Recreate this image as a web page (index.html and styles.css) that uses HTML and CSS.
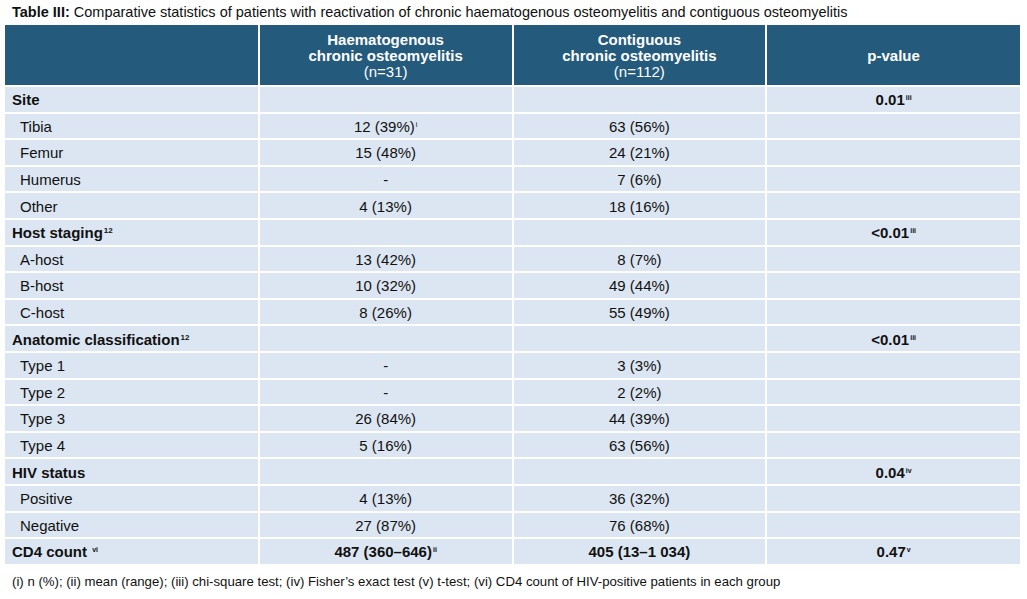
FILE: index.html
```html
<!DOCTYPE html>
<html lang="en">
<head>
<meta charset="utf-8">
<title>Table III</title>
<link rel="stylesheet" href="styles.css">
</head>
<body>
<div class="page">
  <p class="caption"><b>Table III:</b> Comparative statistics of patients with reactivation of chronic haematogenous osteomyelitis and contiguous osteomyelitis</p>
  <table class="stats">
    <colgroup><col class="c"><col class="c"><col class="c"><col class="c"></colgroup>
    <thead>
      <tr>
        <th></th>
        <th>Haematogenous<br>chronic osteomyelitis<br><span class="n">(n=31)</span></th>
        <th>Contiguous<br>chronic osteomyelitis<br><span class="n">(n=112)</span></th>
        <th>p-value</th>
      </tr>
    </thead>
    <tbody>
      <tr class="group"><td>Site</td><td></td><td></td><td class="num">0.01<sup>iii</sup></td></tr>
      <tr><td class="sub">Tibia</td><td class="num">12 (39%)<sup>i</sup></td><td class="num">63 (56%)</td><td></td></tr>
      <tr><td class="sub">Femur</td><td class="num">15 (48%)</td><td class="num">24 (21%)</td><td></td></tr>
      <tr><td class="sub">Humerus</td><td class="num">-</td><td class="num">7 (6%)</td><td></td></tr>
      <tr><td class="sub">Other</td><td class="num">4 (13%)</td><td class="num">18 (16%)</td><td></td></tr>
      <tr class="group"><td>Host staging<sup class="ref">12</sup></td><td></td><td></td><td class="num">&lt;0.01<sup>iii</sup></td></tr>
      <tr><td class="sub">A-host</td><td class="num">13 (42%)</td><td class="num">8 (7%)</td><td></td></tr>
      <tr><td class="sub">B-host</td><td class="num">10 (32%)</td><td class="num">49 (44%)</td><td></td></tr>
      <tr><td class="sub">C-host</td><td class="num">8 (26%)</td><td class="num">55 (49%)</td><td></td></tr>
      <tr class="group"><td>Anatomic classification<sup class="ref">12</sup></td><td></td><td></td><td class="num">&lt;0.01<sup>iii</sup></td></tr>
      <tr><td class="sub">Type 1</td><td class="num">-</td><td class="num">3 (3%)</td><td></td></tr>
      <tr><td class="sub">Type 2</td><td class="num">-</td><td class="num">2 (2%)</td><td></td></tr>
      <tr><td class="sub">Type 3</td><td class="num">26 (84%)</td><td class="num">44 (39%)</td><td></td></tr>
      <tr><td class="sub">Type 4</td><td class="num">5 (16%)</td><td class="num">63 (56%)</td><td></td></tr>
      <tr class="group"><td>HIV status</td><td></td><td></td><td class="num">0.04<sup>iv</sup></td></tr>
      <tr><td class="sub">Positive</td><td class="num">4 (13%)</td><td class="num">36 (32%)</td><td></td></tr>
      <tr><td class="sub">Negative</td><td class="num">27 (87%)</td><td class="num">76 (68%)</td><td></td></tr>
      <tr class="group"><td>CD4 count <sup>vi</sup></td><td class="num">487 (360–646)<sup>ii</sup></td><td class="num">405 (13–1 034)</td><td class="num">0.47<sup>v</sup></td></tr>
    </tbody>
  </table>
  <p class="note">(i) n (%); (ii) mean (range); (iii) chi-square test; (iv) Fisher’s exact test (v) t-test; (vi) CD4 count of HIV-positive patients in each group</p>
</div>
</body>
</html>
```
FILE: styles.css
```css
html, body {
  margin: 0;
  padding: 0;
  background: #ffffff;
}
body {
  font-family: "Liberation Sans", Arial, sans-serif;
  font-size: 13px;
  color: #111111;
}
.page {
  padding: 4px 7px 0 5px;
}
.caption {
  margin: 0 0 5px 7px;
  font-size: 14.5px;
  line-height: 16px;
}
.stats {
  width: 1015px;
  border-collapse: collapse;
  table-layout: fixed;
}
.stats .c {
  width: 25%;
}
.stats th {
  background: #245a7b;
  color: #ffffff;
  font-weight: bold;
  font-size: 15px;
  line-height: 16px;
  height: 59px;
  padding: 1px 0 0;
  text-align: center;
  vertical-align: middle;
  border-left: 2px solid #ffffff;
}
.stats th:first-child {
  border-left: 0;
}
.stats th .n {
  font-weight: normal;
}
.stats td {
  background: #dce6f2;
  height: 22.6px;
  padding: 2px 6px 0;
  font-size: 15px;
  line-height: 16px;
  border-top: 2px solid #ffffff;
  border-left: 2px solid #ffffff;
  vertical-align: middle;
  white-space: nowrap;
}
.stats td:first-child {
  border-left: 0;
  padding-left: 7px;
}
.stats td.sub {
  padding-left: 15px;
}
.stats td.num {
  text-align: center;
}
.stats tr.group td {
  font-weight: bold;
}
.stats sup {
  font-size: 7px;
  line-height: 0;
  vertical-align: 5px;
  margin-left: 1px;
}
.stats sup.ref {
  font-size: 8px;
}
.note {
  margin: 10px 0 0 7px;
  font-size: 13.2px;
  line-height: 16px;
}
```
